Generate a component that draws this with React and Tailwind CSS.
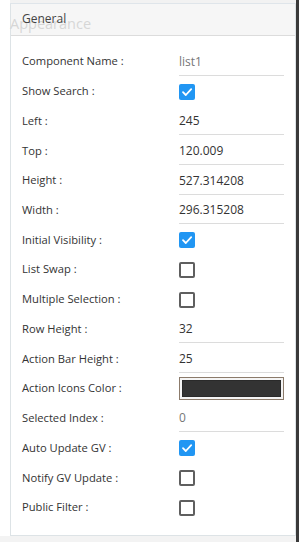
import React from "react";

const rows = [
  { label: "Component Name :", type: "text", value: "list1", muted: true },
  { label: "Show Search :", type: "check", checked: true },
  { label: "Left :", type: "text", value: "245" },
  { label: "Top :", type: "text", value: "120.009" },
  { label: "Height :", type: "text", value: "527.314208" },
  { label: "Width :", type: "text", value: "296.315208" },
  { label: "Initial Visibility :", type: "check", checked: true },
  { label: "List Swap :", type: "check", checked: false },
  { label: "Multiple Selection :", type: "check", checked: false },
  { label: "Row Height :", type: "text", value: "32" },
  { label: "Action Bar Height :", type: "text", value: "25" },
  { label: "Action Icons Color :", type: "color" },
  { label: "Selected Index :", type: "text", value: "0", muted: true },
  { label: "Auto Update GV :", type: "check", checked: true },
  { label: "Notify GV Update :", type: "check", checked: false },
  { label: "Public Filter :", type: "check", checked: false },
];

function Check({ checked }) {
  if (checked) {
    return (
      <div className="w-[16px] h-[16px] rounded-[2px] bg-[#2196f3] flex items-center justify-center">
        <svg width="12" height="12" viewBox="0 0 12 12">
          <path d="M2 6.2 L4.8 9 L10.2 3.2" fill="none" stroke="white" strokeWidth="1.8" strokeLinecap="round" strokeLinejoin="round" />
        </svg>
      </div>
    );
  }
  return <div className="w-[16px] h-[16px] rounded-[2px] border-2 border-[#5f5f5f] bg-white" />;
}

export default function App() {
  return (
    <div className="w-[299px] h-[542px] bg-white flex overflow-hidden relative" style={{ fontFamily: '"Open Sans", "Liberation Sans", sans-serif' }}>
      <div className="flex-1 flex flex-col bg-white">
        <div className="h-[4px] bg-[#f2f2f2] ml-[10px] border-b border-[#dfe5ea]" />
        <div className="ml-[10px] flex-1 border-l border-r border-b border-[#dde3e6] flex flex-col relative">
          <div className="h-[32px] bg-[#f6f6f6] border-b border-[#dcdcdc] pl-[11px] flex items-start pt-[6px] text-[12px] text-[#444] relative">
            <div className="absolute left-[-1px] top-[13px] text-[14.5px] text-[#d6d6d6] leading-none pointer-events-none">Appearance</div>
            <span className="relative">General</span>
          </div>
          <div className="pt-[11px] flex flex-col">
            {rows.map((r, i) => (
              <div key={i} className="h-[29.73px] flex items-center pl-[11px]">
                <div className="w-[157px] text-[11.2px] text-[#333]">{r.label}</div>
                {r.type === "text" && (
                  <div className="w-[105px] h-[24px] relative">
                    <div className={"absolute left-0 top-[3px] text-[12px] " + (r.muted ? "text-[#777]" : "text-[#333]")}>{r.value}</div>
                    <div className="absolute left-0 right-0 bottom-[-2px] h-[1px] bg-[#dcdcdc]" />
                  </div>
                )}
                {r.type === "check" && <Check checked={r.checked} />}
                {r.type === "color" && (
                  <div className="w-[105px] h-[23px] border border-[#8c7b6b] bg-[#f4f4f4] p-[2px]">
                    <div className="w-full h-full bg-[#333333] border border-[#2a2a2a]" />
                  </div>
                )}
              </div>
            ))}
          </div>
        </div>
        <div className="h-[6px] bg-[#f3f3f3]" />
      </div>
      <div className="w-[3px] bg-[#3a3a3a]" />
    </div>
  );
}
